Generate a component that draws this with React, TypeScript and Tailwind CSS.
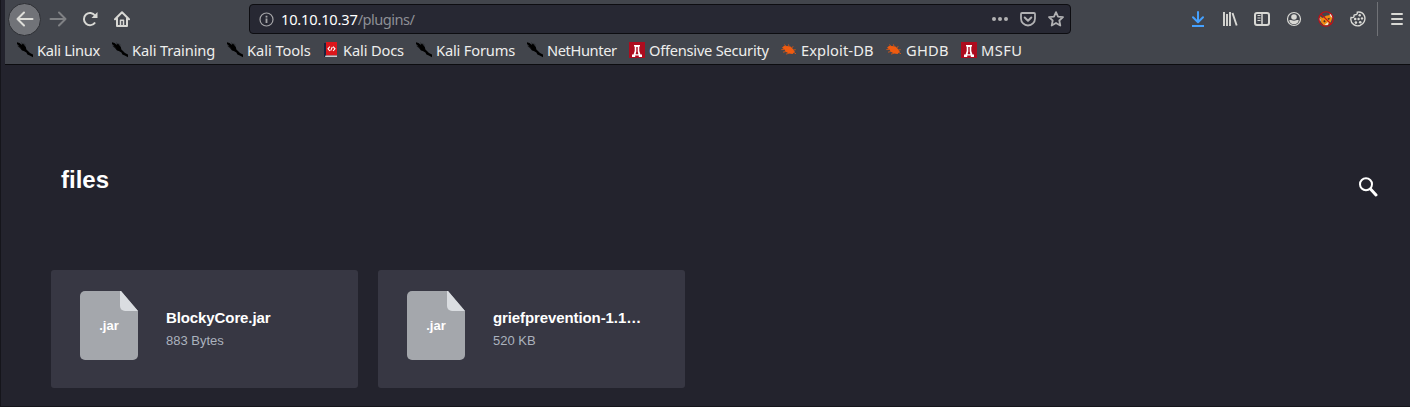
import React from "react";

type IconKind = "kali" | "docs" | "offsec" | "bug";

const bookmarks: { label: string; icon: IconKind; width: string; tracking: string }[] = [
  { label: "Kali Linux", icon: "kali", width: "w-[95px]", tracking: "tracking-[-0.3px]" },
  { label: "Kali Training", icon: "kali", width: "w-[115px]", tracking: "tracking-[-0.12px]" },
  { label: "Kali Tools", icon: "kali", width: "w-[96px]", tracking: "tracking-[-0.05px]" },
  { label: "Kali Docs", icon: "docs", width: "w-[93px]", tracking: "tracking-[-0.15px]" },
  { label: "Kali Forums", icon: "kali", width: "w-[111px]", tracking: "tracking-[-0.18px]" },
  { label: "NetHunter", icon: "kali", width: "w-[102px]", tracking: "tracking-[-0.4px]" },
  { label: "Offensive Security", icon: "offsec", width: "w-[152px]", tracking: "tracking-[-0.25px]" },
  { label: "Exploit-DB", icon: "bug", width: "w-[105px]", tracking: "tracking-[0.1px]" },
  { label: "GHDB", icon: "bug", width: "w-[75px]", tracking: "tracking-[0.25px]" },
  { label: "MSFU", icon: "offsec", width: "w-[70px]", tracking: "tracking-[0.4px]" },
];

const files = [
  { name: "BlockyCore.jar", size: "883 Bytes" },
  { name: "griefprevention-1.1…", size: "520 KB" },
];

function BookmarkIcon({ kind }: { kind: IconKind }) {
  if (kind === "kali")
    return (
      <svg className="size-4 shrink-0" viewBox="0 0 16 16">
        <path d="M0 .3 2.5 1 4.6 2.8 6 1.6 7.6 3.4 8.8 5 9.4 7.6 11.5 9.6 13 11 16 12.4V15.3L12.8 13.5 10.4 12.5 9.4 10.6 6.8 9 5 8.6 3.4 6.4.6 4 2 4 0 2Z" fill="#000" />
        <path d="M4 .8 5.6 1.6M7 1.5 8.6 3.4M.8 3.5 3.7 6.4" stroke="#26282c" strokeWidth=".8" />
      </svg>
    );
  if (kind === "docs")
    return (
      <svg className="size-4 shrink-0" viewBox="0 0 16 16">
        <path d="M1 1h3v14H1z" fill="#18243f" />
        <path d="M3 0h11v13.5H3z" fill="#dc161b" />
        <path d="M2.5 13.5H14V15H2z" fill="#c9cbd0" />
        <path d="M6.9 4.6 5 6.8 6.9 9M10.1 4.6 12 6.8 10.1 9M9.3 5 7.7 8.6" fill="none" stroke="#fff" strokeWidth="1.1" />
      </svg>
    );
  if (kind === "offsec")
    return (
      <svg className="size-4 shrink-0" viewBox="0 0 16 16">
        <path d="M0 0h16v16H0z" fill="#ad0c1e" />
        <path d="M5 3h6v1.4h-.7V9l1.2 3.5H13V15H9.8v-1.5H6.2V15H3v-2.5h1.5L5.7 9V4.4H5Z" fill="#fff" />
        <path d="M7.3 5h1.4v4.5l.7 2.7H6.6l.7-2.7Z" fill="#ad0c1e" />
      </svg>
    );
  return (
    <svg className="size-4 shrink-0" viewBox="0 0 16 16">
      <path d="M1 5.8 3.2 3.8 6 4 9.5 4.6 12 7 13.8 9.8 11.5 12 8 11.4 4.7 9.7 3.4 7.4Z" fill="#ef5b10" />
      <path d="M5 4.4 3.5 2.5M8.2 4.6 7.4 2.4M10.8 6l1.4-1.8M12.3 8l2.4-.3M3.7 7.5.3 7.6M5 9.5l-3 .7M8 11.3l-3 .8M13 10.5l2 1.3" stroke="#c8541a" strokeWidth="1" />
    </svg>
  );
}

function FileCard({ name, size }: { name: string; size: string }) {
  return (
    <li className="flex h-[118px] w-[307px] rounded-[3px] bg-[#373743] pl-[29px] pt-[21px]">
      <div className="grid h-[69px] w-[58px] shrink-0 grid-cols-1 grid-rows-1">
        <svg className="col-start-1 row-start-1" width="58" height="69" viewBox="0 0 58 69">
          <path d="M5 0h36l17 20v44a5 5 0 0 1-5 5H5a5 5 0 0 1-5-5V5a5 5 0 0 1 5-5Z" fill="#a4a7ac" />
          <path d="M40 0h1l17 20H45a5 5 0 0 1-5-5Z" fill="#dadde1" />
        </svg>
        <span className="col-start-1 row-start-1 self-center justify-self-center text-[13px] font-bold leading-4 text-white">.jar</span>
      </div>
      <div className="ml-7 w-[150px] pt-[16px]">
        <p className="whitespace-nowrap text-[15px] font-bold leading-[22px] tracking-[-0.1px] text-white">{name}</p>
        <p className="text-[13px] leading-[23px] text-[#abb2be]">{size}</p>
      </div>
    </li>
  );
}

export default function App() {
  return (
    <div className="flex h-[407px] w-[1410px] flex-col overflow-hidden border-l border-[#15151b] bg-[#23232d] font-['Liberation_Sans',sans-serif]">
      <header className="ml-1 h-[65px] shrink-0 border-b border-[#0c0c0f] bg-[#42454c] font-['Noto_Sans',sans-serif] text-[14.67px] text-[#eeeeec]">
        <div className="flex h-[38px] items-center">
          <button className="ml-[3px] flex size-[33px] shrink-0 items-center justify-center rounded-full border border-[#2d2f34] bg-[#717378]">
            <svg width="18" height="18" viewBox="0 0 18 18" fill="none" stroke="#deded9" strokeWidth="2" strokeLinecap="round" strokeLinejoin="round"><path d="M16.5 9h-15M8 2.5 1.5 9 8 15.5" /></svg>
          </button>
          <svg className="ml-2 shrink-0" width="18" height="18" viewBox="0 0 18 18" fill="none" stroke="#7f8184" strokeWidth="2" strokeLinecap="round" strokeLinejoin="round"><path d="M1.5 9h15M10 2.5 16.5 9 10 15.5" /></svg>
          <svg className="ml-[15px] shrink-0" width="16" height="16" viewBox="0 0 16 16" fill="none" stroke="#d8d8d4" strokeWidth="2"><path d="M13.1 11.5A6.1 6.1 0 1 1 13 4.5L14 6" /><path d="M15.5 1v6h-6Z" fill="#d8d8d4" stroke="none" /></svg>
          <svg className="ml-4 shrink-0" width="16" height="16" viewBox="0 0 16 16" fill="none" stroke="#d8d8d4" strokeWidth="2" strokeLinejoin="round" strokeLinecap="round"><path d="M1 8.2 8 1.3l7 6.9M3 7.5V15h10V7.5" /><path d="M6.5 14V9.2h3V14" strokeWidth="1.5" /></svg>
          <div className="ml-[119px] flex h-[30px] w-[822px] shrink-0 items-center rounded-[4px] border border-[#0d0d11] bg-[#272833] pl-[9px] pr-[6px]">
            <svg width="15" height="15" viewBox="0 0 15 15" fill="none" stroke="#a5a5a8"><circle cx="7.5" cy="7.5" r="6.5" strokeWidth="1.2" /><path d="M7.5 6.5V11M7.5 3.7v1.8" strokeWidth="1.8" /></svg>
            <span className="ml-[7px] whitespace-pre tracking-[-0.2px] text-white">10.10.10.37<span className="tracking-[-0.55px] text-[#8d8f95]">/plugins/</span></span>
            <svg className="ml-auto" width="16" height="16" viewBox="0 0 16 16" fill="#b1b1b3"><circle cx="2" cy="8" r="2" /><circle cx="8" cy="8" r="2" /><circle cx="14" cy="8" r="2" /></svg>
            <svg className="ml-3" width="16" height="16" viewBox="0 0 16 16" fill="none" stroke="#b1b1b3" strokeWidth="2" strokeLinecap="round" strokeLinejoin="round"><path d="M2 2h12a1 1 0 0 1 1 1v4.5a7 7 0 0 1-14 0V3a1 1 0 0 1 1-1Z" strokeWidth="1.8" /><path d="M4.7 6.5 8 9.7l3.3-3.2" /></svg>
            <svg className="ml-3" width="16" height="16" viewBox="0 0 16 16" fill="none" stroke="#b1b1b3" strokeWidth="1.8" strokeLinejoin="round"><path d="m8 1.1 2 4.5 5 .5-3.7 3.4 1 5L8 12l-4.3 2.5 1-5L1 6.1l5-.5Z" /></svg>
          </div>
          <div className="ml-[119px] flex items-center gap-4">
            <svg width="16" height="16" viewBox="0 0 16 16" fill="none" stroke="#45a1ff" strokeWidth="2"><path d="M8 1v10M3 6.3l5 5 5-5" strokeLinecap="round" strokeLinejoin="round" /><path d="M2 15h12" /></svg>
            <svg width="16" height="16" viewBox="0 0 16 16" fill="none" stroke="#d8d8d4" strokeWidth="2"><path d="M2 1v14M5 3v12M8 1v14M10.5 2l4.2 12.5" strokeWidth="1.9" /></svg>
            <svg width="16" height="16" viewBox="0 0 16 16" fill="none" stroke="#d8d8d4"><rect x="1" y="2" width="14" height="12" rx="2" strokeWidth="2" /><path d="M8 2v12" strokeWidth="1.5" /><path d="M3.5 4.5h3M3.5 7h3M3.5 9.5h3" /></svg>
            <svg width="16" height="16" viewBox="0 0 16 16"><circle cx="8" cy="8" r="6.5" fill="none" stroke="#d8d8d4" strokeWidth="1.2" /><circle cx="8" cy="6" r="2.8" fill="#d8d8d4" /><path d="M3.2 9.3C5 8.7 5.6 9.8 8 9.8s3-1.1 4.8-.5c-.4 2.5-2.3 4-4.8 4s-4.4-1.5-4.8-4Z" fill="#d8d8d4" /></svg>
            <svg width="16" height="16" viewBox="0 0 16 16"><path d="M1.5 5 4.5 7 8 4.8 11 4.2 13 3l1.3 4-1.5 4-2.8 3-4 .5-2.8-3Z" fill="#f08b13" /><path d="m11.5 2.5 2.5.7.8 4-2.3-1.7ZM1 6.5l1.8 2.3L2 11ZM6.5 14l4.2-3.5-1 3.7Z" fill="#eee7da" /><path d="m5.2 10 1.5-1 1 1.7-1.5.8ZM9.5 7.5l1.8-.8.6 1.4-1.5.8Z" fill="#4c3727" /><circle cx="8" cy="8" r="7.2" fill="none" stroke="#c80d14" strokeWidth="1.1" /><path d="m2.9 2.9 10.2 10.2" stroke="#c80d14" strokeWidth="1.2" /></svg>
            <svg width="16" height="16" viewBox="0 0 16 16"><path d="M7.2 1.1C10 .6 13 1.8 14.3 4.6 16 8.5 14 13 10 14.5 5.4 16 1 12.8.8 8.5c0-.8.1-1.5.3-2.2 1.3.6 2.7.2 3-.9-.4-1.2.3-2 1.6-1.7C6.9 3.5 7.7 2.3 7.2 1.1Z" fill="none" stroke="#d8d8d4" strokeWidth="1.4" strokeLinejoin="round" /><g fill="#d8d8d4"><circle cx="9.7" cy="4.3" r="1.2" /><circle cx="5.2" cy="8" r="1.3" /><circle cx="8.6" cy="8" r="1.2" /><circle cx="12" cy="7.4" r="1.2" /><circle cx="5.9" cy="11.6" r="1.3" /><circle cx="10.2" cy="11.3" r="1.3" /></g></svg>
          </div>
          <div className="ml-[11px] h-[34px] w-px bg-[#707277]" />
          <svg className="ml-3 shrink-0" width="14" height="16" viewBox="0 0 14 16" fill="none" stroke="#d8d8d4" strokeWidth="2" strokeLinecap="round"><path d="M2 3h10M2 8h10M2 13h10" /></svg>
        </div>
        <nav className="flex h-6 items-center pl-3">
          {bookmarks.map((b) => (
            <a key={b.label} className={"flex shrink-0 items-center gap-1 whitespace-nowrap " + b.width}>
              <BookmarkIcon kind={b.icon} />
              <span className={b.tracking}>{b.label}</span>
            </a>
          ))}
        </nav>
      </header>
      <main className="flex grow flex-col border-b border-[#15151b]">
        <div className="mt-[100px] flex h-[30px] items-start justify-between pl-[60px] pr-8">
          <h1 className="text-[24px] font-bold leading-[30px] text-white">files</h1>
          <svg className="mt-3" width="20" height="20" viewBox="0 0 20 20" fill="none" stroke="#fff"><circle cx="8" cy="7.3" r="6" strokeWidth="2" /><path d="m12.5 12 5.5 6" strokeWidth="3" strokeLinecap="round" /></svg>
        </div>
        <ul className="mt-[75px] flex gap-5 pl-[50px]">
          {files.map((f) => (
            <FileCard key={f.name} name={f.name} size={f.size} />
          ))}
        </ul>
      </main>
    </div>
  );
}
